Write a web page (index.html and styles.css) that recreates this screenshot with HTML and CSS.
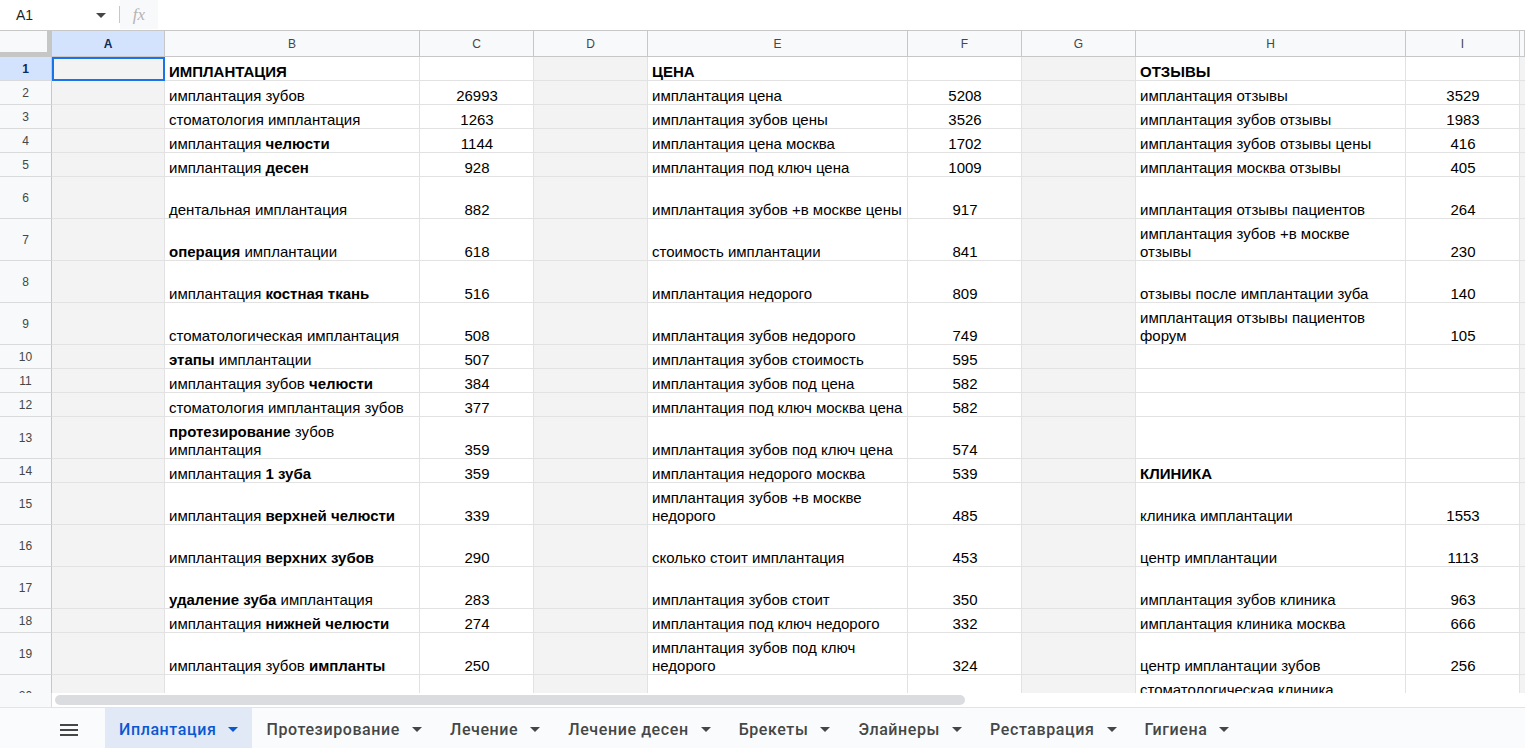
FILE: index.html
```html
<!DOCTYPE html>
<html lang="ru">
<head>
<meta charset="utf-8">
<title>Иплантация</title>
<link rel="stylesheet" href="styles.css">
</head>
<body>
<div class="app">
  <div class="topbar">
    <div class="namebox"><span class="nb-text">A1</span><span class="caret"></span></div>
    <div class="sep"></div>
    <div class="fx">fx</div>
    <div class="formula"></div>
  </div>

  <div class="sheet">
    <div class="row hdr">
      <div class="corner"></div>
      <div class="ch sel">A</div><div class="ch">B</div><div class="ch">C</div><div class="ch">D</div><div class="ch">E</div><div class="ch">F</div><div class="ch">G</div><div class="ch">H</div><div class="ch">I</div><div class="ch"></div>
    </div>

    <div class="row">
      <div class="rh sel">1</div>
      <div class="c g a1"></div><div class="c"><span><b>ИМПЛАНТАЦИЯ</b></span></div><div class="c n"></div><div class="c g"></div><div class="c"><span><b>ЦЕНА</b></span></div><div class="c n"></div><div class="c g"></div><div class="c"><span><b>ОТЗЫВЫ</b></span></div><div class="c n"></div><div class="c g"></div>
    </div>
    <div class="row">
      <div class="rh">2</div>
      <div class="c g"></div><div class="c"><span>имплантация зубов</span></div><div class="c n"><span>26993</span></div><div class="c g"></div><div class="c"><span>имплантация цена</span></div><div class="c n"><span>5208</span></div><div class="c g"></div><div class="c"><span>имплантация отзывы</span></div><div class="c n"><span>3529</span></div><div class="c g"></div>
    </div>
    <div class="row">
      <div class="rh">3</div>
      <div class="c g"></div><div class="c"><span>стоматология имплантация</span></div><div class="c n"><span>1263</span></div><div class="c g"></div><div class="c"><span>имплантация зубов цены</span></div><div class="c n"><span>3526</span></div><div class="c g"></div><div class="c"><span>имплантация зубов отзывы</span></div><div class="c n"><span>1983</span></div><div class="c g"></div>
    </div>
    <div class="row">
      <div class="rh">4</div>
      <div class="c g"></div><div class="c"><span>имплантация <b>челюсти</b></span></div><div class="c n"><span>1144</span></div><div class="c g"></div><div class="c"><span>имплантация цена москва</span></div><div class="c n"><span>1702</span></div><div class="c g"></div><div class="c"><span>имплантация зубов отзывы цены</span></div><div class="c n"><span>416</span></div><div class="c g"></div>
    </div>
    <div class="row">
      <div class="rh">5</div>
      <div class="c g"></div><div class="c"><span>имплантация <b>десен</b></span></div><div class="c n"><span>928</span></div><div class="c g"></div><div class="c"><span>имплантация под ключ цена</span></div><div class="c n"><span>1009</span></div><div class="c g"></div><div class="c"><span>имплантация москва отзывы</span></div><div class="c n"><span>405</span></div><div class="c g"></div>
    </div>
    <div class="row tall">
      <div class="rh">6</div>
      <div class="c g"></div><div class="c"><span>дентальная имплантация</span></div><div class="c n"><span>882</span></div><div class="c g"></div><div class="c"><span>имплантация зубов +в москве цены</span></div><div class="c n"><span>917</span></div><div class="c g"></div><div class="c"><span>имплантация отзывы пациентов</span></div><div class="c n"><span>264</span></div><div class="c g"></div>
    </div>
    <div class="row tall">
      <div class="rh">7</div>
      <div class="c g"></div><div class="c"><span><b>операция</b> имплантации</span></div><div class="c n"><span>618</span></div><div class="c g"></div><div class="c"><span>стоимость имплантации</span></div><div class="c n"><span>841</span></div><div class="c g"></div><div class="c"><span>имплантация зубов +в москве<br>отзывы</span></div><div class="c n"><span>230</span></div><div class="c g"></div>
    </div>
    <div class="row tall">
      <div class="rh">8</div>
      <div class="c g"></div><div class="c"><span>имплантация <b>костная ткань</b></span></div><div class="c n"><span>516</span></div><div class="c g"></div><div class="c"><span>имплантация недорого</span></div><div class="c n"><span>809</span></div><div class="c g"></div><div class="c"><span>отзывы после имплантации зуба</span></div><div class="c n"><span>140</span></div><div class="c g"></div>
    </div>
    <div class="row tall">
      <div class="rh">9</div>
      <div class="c g"></div><div class="c"><span>стоматологическая имплантация</span></div><div class="c n"><span>508</span></div><div class="c g"></div><div class="c"><span>имплантация зубов недорого</span></div><div class="c n"><span>749</span></div><div class="c g"></div><div class="c"><span>имплантация отзывы пациентов<br>форум</span></div><div class="c n"><span>105</span></div><div class="c g"></div>
    </div>
    <div class="row">
      <div class="rh">10</div>
      <div class="c g"></div><div class="c"><span><b>этапы</b> имплантации</span></div><div class="c n"><span>507</span></div><div class="c g"></div><div class="c"><span>имплантация зубов стоимость</span></div><div class="c n"><span>595</span></div><div class="c g"></div><div class="c"></div><div class="c n"></div><div class="c g"></div>
    </div>
    <div class="row">
      <div class="rh">11</div>
      <div class="c g"></div><div class="c"><span>имплантация зубов <b>челюсти</b></span></div><div class="c n"><span>384</span></div><div class="c g"></div><div class="c"><span>имплантация зубов под цена</span></div><div class="c n"><span>582</span></div><div class="c g"></div><div class="c"></div><div class="c n"></div><div class="c g"></div>
    </div>
    <div class="row">
      <div class="rh">12</div>
      <div class="c g"></div><div class="c"><span>стоматология имплантация зубов</span></div><div class="c n"><span>377</span></div><div class="c g"></div><div class="c"><span>имплантация под ключ москва цена</span></div><div class="c n"><span>582</span></div><div class="c g"></div><div class="c"></div><div class="c n"></div><div class="c g"></div>
    </div>
    <div class="row tall">
      <div class="rh">13</div>
      <div class="c g"></div><div class="c"><span><b>протезирование</b> зубов<br>имплантация</span></div><div class="c n"><span>359</span></div><div class="c g"></div><div class="c"><span>имплантация зубов под ключ цена</span></div><div class="c n"><span>574</span></div><div class="c g"></div><div class="c"></div><div class="c n"></div><div class="c g"></div>
    </div>
    <div class="row">
      <div class="rh">14</div>
      <div class="c g"></div><div class="c"><span>имплантация <b>1 зуба</b></span></div><div class="c n"><span>359</span></div><div class="c g"></div><div class="c"><span>имплантация недорого москва</span></div><div class="c n"><span>539</span></div><div class="c g"></div><div class="c"><span><b>КЛИНИКА</b></span></div><div class="c n"></div><div class="c g"></div>
    </div>
    <div class="row tall">
      <div class="rh">15</div>
      <div class="c g"></div><div class="c"><span>имплантация <b>верхней челюсти</b></span></div><div class="c n"><span>339</span></div><div class="c g"></div><div class="c"><span>имплантация зубов +в москве<br>недорого</span></div><div class="c n"><span>485</span></div><div class="c g"></div><div class="c"><span>клиника имплантации</span></div><div class="c n"><span>1553</span></div><div class="c g"></div>
    </div>
    <div class="row tall">
      <div class="rh">16</div>
      <div class="c g"></div><div class="c"><span>имплантация <b>верхних зубов</b></span></div><div class="c n"><span>290</span></div><div class="c g"></div><div class="c"><span>сколько стоит имплантация</span></div><div class="c n"><span>453</span></div><div class="c g"></div><div class="c"><span>центр имплантации</span></div><div class="c n"><span>1113</span></div><div class="c g"></div>
    </div>
    <div class="row tall">
      <div class="rh">17</div>
      <div class="c g"></div><div class="c"><span><b>удаление зуба</b> имплантация</span></div><div class="c n"><span>283</span></div><div class="c g"></div><div class="c"><span>имплантация зубов стоит</span></div><div class="c n"><span>350</span></div><div class="c g"></div><div class="c"><span>имплантация зубов клиника</span></div><div class="c n"><span>963</span></div><div class="c g"></div>
    </div>
    <div class="row">
      <div class="rh">18</div>
      <div class="c g"></div><div class="c"><span>имплантация <b>нижней челюсти</b></span></div><div class="c n"><span>274</span></div><div class="c g"></div><div class="c"><span>имплантация под ключ недорого</span></div><div class="c n"><span>332</span></div><div class="c g"></div><div class="c"><span>имплантация клиника москва</span></div><div class="c n"><span>666</span></div><div class="c g"></div>
    </div>
    <div class="row tall">
      <div class="rh">19</div>
      <div class="c g"></div><div class="c"><span>имплантация зубов <b>импланты</b></span></div><div class="c n"><span>250</span></div><div class="c g"></div><div class="c"><span>имплантация зубов под ключ<br>недорого</span></div><div class="c n"><span>324</span></div><div class="c g"></div><div class="c"><span>центр имплантации зубов</span></div><div class="c n"><span>256</span></div><div class="c g"></div>
    </div>
    <div class="row tall">
      <div class="rh">20</div>
      <div class="c g"></div><div class="c"></div><div class="c n"></div><div class="c g"></div><div class="c"></div><div class="c n"></div><div class="c g"></div><div class="c"><span>стоматологическая клиника<br>москва</span></div><div class="c n"></div><div class="c g"></div>
    </div>
  </div>

  <div class="hscroll">
    <div class="hs-left"></div>
    <div class="hs-track"><div class="hs-thumb"></div></div>
  </div>

  <div class="tabbar">
    <div class="menu">
      <svg width="18" height="12" viewBox="0 0 18 12"><rect x="0" y="0" width="18" height="2" fill="#444746"/><rect x="0" y="5" width="18" height="2" fill="#444746"/><rect x="0" y="10" width="18" height="2" fill="#444746"/></svg>
    </div>
    <div class="tab active"><span>Иплантация</span><i class="tcaret"></i></div>
    <div class="tab"><span>Протезирование</span><i class="tcaret"></i></div>
    <div class="tab"><span>Лечение</span><i class="tcaret"></i></div>
    <div class="tab"><span>Лечение десен</span><i class="tcaret"></i></div>
    <div class="tab"><span>Брекеты</span><i class="tcaret"></i></div>
    <div class="tab"><span>Элайнеры</span><i class="tcaret"></i></div>
    <div class="tab"><span>Реставрация</span><i class="tcaret"></i></div>
    <div class="tab"><span>Гигиена</span><i class="tcaret"></i></div>
  </div>
</div>
</body>
</html>
```

FILE: styles.css
```css
* { box-sizing: border-box; }
html, body { margin: 0; padding: 0; }
body {
  width: 1525px;
  height: 748px;
  overflow: hidden;
  background: #fff;
  font-family: "Liberation Sans", Arial, sans-serif;
  color: #000;
}
.app {
  display: flex;
  flex-direction: column;
  height: 748px;
}

/* top bar */
.topbar {
  height: 31px;
  flex: none;
  display: flex;
  align-items: stretch;
  border-bottom: 1px solid #c7c7c7;
}
.namebox {
  width: 119px;
  display: flex;
  align-items: center;
  padding-left: 16px;
  font-size: 14px;
  color: #1f1f1f;
}
.nb-text { flex: 1; }
.caret {
  width: 0; height: 0;
  border-left: 5px solid transparent;
  border-right: 5px solid transparent;
  border-top: 5px solid #444746;
  margin-right: 13px;
}
.sep {
  width: 1px;
  background: #c7c7c7;
  margin: 6px 0 7px;
}
.fx {
  width: 38px;
  margin-bottom: 1px;
  background: #f8f9fa;
  display: flex;
  align-items: center;
  justify-content: center;
  font-family: "Liberation Serif", serif;
  font-style: italic;
  font-size: 17px;
  color: #b4b4b4;
}
.formula { flex: 1; }

/* sheet grid */
.sheet {
  flex: 1;
  overflow: hidden;
}
.row {
  display: grid;
  grid-template-columns: 52px 113px 255px 114px 114px 260px 114px 114px 270px 114px 1fr;
  height: 24px;
}
.row.tall { height: 42px; }
.row.hdr { height: 26px; }

.corner {
  background: #f8f9fa;
  border-right: 5px solid #c4c7c5;
  border-bottom: 5px solid #c4c7c5;
}
.ch {
  background: #f8f9fa;
  border-right: 1px solid #c7c7c7;
  border-bottom: 1px solid #c7c7c7;
  display: flex;
  align-items: center;
  justify-content: center;
  font-size: 12px;
  color: #444746;
}
.ch.sel, .rh.sel {
  background: #d3e3fd;
  color: #0b2b5a;
  font-weight: bold;
}
.rh {
  background: #f8f9fa;
  border-right: 1px solid #c7c7c7;
  border-bottom: 1px solid #dadada;
  display: flex;
  align-items: center;
  justify-content: center;
  font-size: 12px;
  color: #444746;
}
.c {
  border-right: 1px solid #e2e2e3;
  border-bottom: 1px solid #e2e2e3;
  display: flex;
  align-items: flex-end;
  padding: 0 3px 0 4px;
  font-size: 15px;
  line-height: 18px;
  white-space: nowrap;
  overflow: hidden;
}
.c > span { margin-bottom: -1px; }
.c b { font-weight: bold; }
.c.n { justify-content: center; }
.c.g { background: #f3f3f3; }
.c.a1 { border: 2px solid #1a73e8; }

/* horizontal scroll */
.hscroll {
  height: 14px;
  flex: none;
  display: flex;
}
.hs-left {
  width: 52px;
  background: #f8f9fa;
  border-right: 1px solid #dadada;
}
.hs-track {
  flex: 1;
  padding: 2px 3px 2px 3px;
}
.hs-thumb {
  width: 910px;
  height: 10px;
  background: #dadce0;
  border-radius: 5px;
}

/* tabs */
.tabbar {
  height: 41px;
  flex: none;
  display: flex;
  align-items: stretch;
  background: #f9fbfd;
  border-top: 1px solid #e3e3e3;
  font-family: Roboto, "Liberation Sans", sans-serif;
  font-weight: 500;
  font-size: 16px;
  letter-spacing: 0.6px;
  color: #444746;
}
.menu {
  width: 105px;
  display: flex;
  align-items: center;
  padding: 3px 0 0 60px;
}
.tab {
  display: flex;
  align-items: center;
  padding: 3px 14px 0 14px;
  gap: 12px;
}
.tab.active {
  background: #e1e9f7;
  color: #0b57d0;
}
.tcaret {
  width: 0; height: 0;
  border-left: 5px solid transparent;
  border-right: 5px solid transparent;
  border-top: 5px solid currentColor;
}
.tab .tcaret { border-top-color: #444746; }
.tab.active .tcaret { border-top-color: #0b57d0; }
```
